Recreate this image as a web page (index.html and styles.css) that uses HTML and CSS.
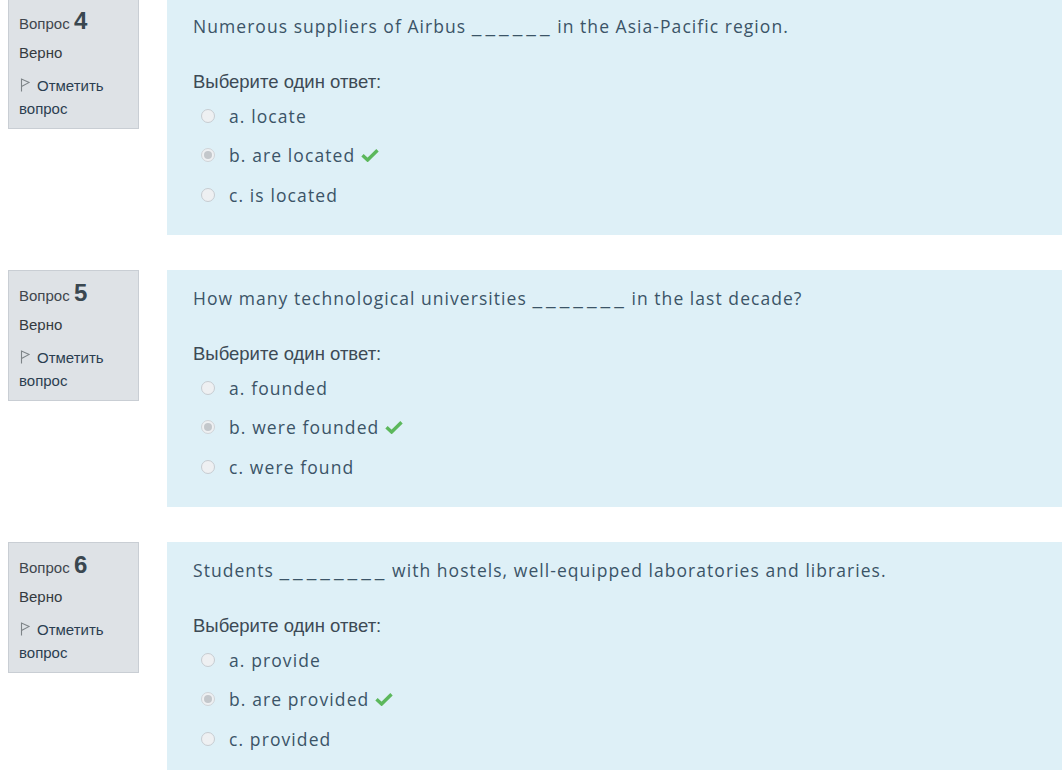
FILE: index.html
```html
<!DOCTYPE html>
<html lang="ru">
<head>
<meta charset="utf-8">
<title>Quiz</title>
<link rel="stylesheet" href="styles.css">
</head>
<body>
<div class="page">
  <div class="que">
    <div class="info">
      <div class="qno"><span class="lbl">Вопрос</span> <span class="num">4</span></div>
      <div class="state">Верно</div>
      <div class="flag"><svg class="flag-ico" width="10" height="14" viewBox="0 0 10 14"><path d="M1.5 13.5V1L9.2 4.4L1.5 8.6" fill="none" stroke="#7d8387" stroke-width="1.1"/></svg>Отметить вопрос</div>
    </div>
    <div class="content">
      <div class="qtext">Numerous suppliers of Airbus <span class="blank">______</span> in the Asia-Pacific region.</div>
      <div class="prompt">Выберите один ответ:</div>
      <div class="answer">
        <div class="opt"><span class="radio"></span><span class="otext">a. locate</span></div>
        <div class="opt"><span class="radio checked"></span><span class="otext">b. are located</span><svg class="tick" width="18" height="14" viewBox="0 0 18 14"><path d="M1.5 7.2L6.6 12L16.5 2.2" fill="none" stroke="#5cb85c" stroke-width="3.4"/></svg></div>
        <div class="opt"><span class="radio"></span><span class="otext">c. is located</span></div>
      </div>
    </div>
  </div>
  <div class="que">
    <div class="info">
      <div class="qno"><span class="lbl">Вопрос</span> <span class="num">5</span></div>
      <div class="state">Верно</div>
      <div class="flag"><svg class="flag-ico" width="10" height="14" viewBox="0 0 10 14"><path d="M1.5 13.5V1L9.2 4.4L1.5 8.6" fill="none" stroke="#7d8387" stroke-width="1.1"/></svg>Отметить вопрос</div>
    </div>
    <div class="content">
      <div class="qtext">How many technological universities <span class="blank">_______</span> in the last decade?</div>
      <div class="prompt">Выберите один ответ:</div>
      <div class="answer">
        <div class="opt"><span class="radio"></span><span class="otext">a. founded</span></div>
        <div class="opt"><span class="radio checked"></span><span class="otext">b. were founded</span><svg class="tick" width="18" height="14" viewBox="0 0 18 14"><path d="M1.5 7.2L6.6 12L16.5 2.2" fill="none" stroke="#5cb85c" stroke-width="3.4"/></svg></div>
        <div class="opt"><span class="radio"></span><span class="otext">c. were found</span></div>
      </div>
    </div>
  </div>
  <div class="que">
    <div class="info">
      <div class="qno"><span class="lbl">Вопрос</span> <span class="num">6</span></div>
      <div class="state">Верно</div>
      <div class="flag"><svg class="flag-ico" width="10" height="14" viewBox="0 0 10 14"><path d="M1.5 13.5V1L9.2 4.4L1.5 8.6" fill="none" stroke="#7d8387" stroke-width="1.1"/></svg>Отметить вопрос</div>
    </div>
    <div class="content">
      <div class="qtext">Students <span class="blank">________</span> with hostels, well-equipped laboratories and libraries.</div>
      <div class="prompt">Выберите один ответ:</div>
      <div class="answer">
        <div class="opt"><span class="radio"></span><span class="otext">a. provide</span></div>
        <div class="opt"><span class="radio checked"></span><span class="otext">b. are provided</span><svg class="tick" width="18" height="14" viewBox="0 0 18 14"><path d="M1.5 7.2L6.6 12L16.5 2.2" fill="none" stroke="#5cb85c" stroke-width="3.4"/></svg></div>
        <div class="opt"><span class="radio"></span><span class="otext">c. provided</span></div>
      </div>
    </div>
  </div>
</div>
</body>
</html>
```
FILE: styles.css
```css
html, body {
  margin: 0;
  padding: 0;
  background: #ffffff;
}
body {
  overflow: hidden;
}
.page {
  margin-top: -2px;
  display: flex;
  flex-direction: column;
  gap: 35px;
}
.que {
  display: flex;
  align-items: flex-start;
}
.info {
  box-sizing: border-box;
  width: 131px;
  height: 131px;
  margin-left: 8px;
  padding: 9px 10px 0 10px;
  background: #dee2e6;
  border: 1px solid #c9ced4;
  font-family: "Liberation Sans", Arial, sans-serif;
  color: #343a40;
}
.qno {
  height: 26px;
  line-height: 26px;
  white-space: nowrap;
}
.qno .lbl {
  font-size: 15px;
  color: #3f464d;
}
.qno .num {
  font-size: 24px;
  font-weight: bold;
  color: #3a4750;
}
.state {
  margin-top: 8px;
  font-size: 15px;
  line-height: 22px;
  color: #343a40;
}
.flag {
  margin-top: 10px;
  font-size: 15px;
  line-height: 23px;
  color: #2b3e50;
}
.flag-ico {
  vertical-align: -1px;
  margin: 0 7px 0 1px;
}
.content {
  flex: 1;
  box-sizing: border-box;
  height: 237px;
  margin-left: 28px;
  padding: 16px 0 0 26px;
  background: #def0f7;
  color: #3b5467;
  font-family: "Open Sans", sans-serif;
}
.qtext {
  font-size: 17.5px;
  letter-spacing: 1.05px;
  line-height: 24px;
  white-space: nowrap;
}
.blank {
  font-size: 22px;
  line-height: 0;
  letter-spacing: 4px;
  margin-right: -2px;
}
.prompt {
  margin-top: 32px;
  font-family: "Liberation Sans", Arial, sans-serif;
  font-size: 18.5px;
  line-height: 24px;
  color: #3d4a55;
}
.answer {
  margin-top: 9.5px;
  padding-left: 8px;
  display: flex;
  flex-direction: column;
  gap: 15.5px;
}
.opt {
  display: flex;
  align-items: center;
  height: 24px;
  font-size: 17.5px;
  letter-spacing: 1.1px;
}
.radio {
  box-sizing: border-box;
  width: 14px;
  height: 14px;
  border-radius: 50%;
  border: 1px solid #c7ccd1;
  background: #eef0f2;
  margin-right: 14px;
  flex: none;
  position: relative;
}
.radio.checked {
  border-color: #d0d4d8;
  background: #eef0f2;
}
.radio.checked::after {
  content: "";
  position: absolute;
  left: 2px;
  top: 2px;
  width: 8px;
  height: 8px;
  border-radius: 50%;
  background: #c3c7cb;
}
.tick {
  margin-left: 6px;
}
```
